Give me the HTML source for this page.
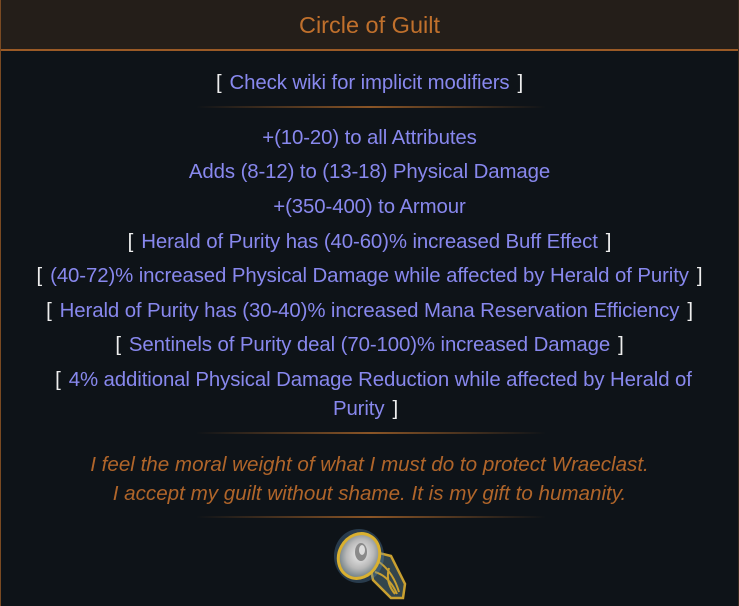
<!DOCTYPE html>
<html><head><meta charset="utf-8"><style>
html,body{margin:0;padding:0;width:739px;height:606px;overflow:hidden;background:#0e1318;font-family:"Liberation Sans",sans-serif}
.wrap{position:absolute;left:0;top:0;width:737px;height:606px;border-left:1px solid #7a4a22;border-right:1px solid #3a2a1e}
.hdr{height:49px;background:#241e19;border-bottom:2px solid #9a5a26;text-align:center;color:#c0702c;font-size:23.5px;line-height:50px}
.l{position:absolute;left:0;width:737px;text-align:center;color:#8888ee;font-size:20.4px;white-space:nowrap;letter-spacing:-0.1px}
.b{color:#eeeeee;margin:0 8px}
.sep{position:absolute;left:195px;width:350px;height:2px;background:linear-gradient(90deg,rgba(120,70,30,0),#8a5526 50%,rgba(120,70,30,0))}
.f{position:absolute;left:0;width:737px;text-align:center;color:#b0652a;font-size:20.6px;font-style:italic}
</style></head><body><div class="wrap">
<div class="hdr">Circle of Guilt</div>
<div class="l" style="top:72px"><span class="b">[</span>Check wiki for implicit modifiers<span class="b">]</span></div>
<div class="sep" style="top:106px"></div>
<div class="l" style="top:127px">+(10-20) to all Attributes</div>
<div class="l" style="top:161px">Adds (8-12) to (13-18) Physical Damage</div>
<div class="l" style="top:196px">+(350-400) to Armour</div>
<div class="l" style="top:231px"><span class="b">[</span>Herald of Purity has (40-60)% increased Buff Effect<span class="b">]</span></div>
<div class="l" style="top:265px"><span class="b">[</span>(40-72)% increased Physical Damage while affected by Herald of Purity<span class="b">]</span></div>
<div class="l" style="top:300px"><span class="b">[</span>Herald of Purity has (30-40)% increased Mana Reservation Efficiency<span class="b">]</span></div>
<div class="l" style="top:334px"><span class="b">[</span>Sentinels of Purity deal (70-100)% increased Damage<span class="b">]</span></div>
<div class="l" style="top:369px"><span class="b">[</span>4% additional Physical Damage Reduction while affected by Herald of</div>
<div class="l" style="top:398px">Purity<span class="b">]</span></div>
<div class="sep" style="top:432px"></div>
<div class="f" style="top:453px">I feel the moral weight of what I must do to protect Wraeclast.</div>
<div class="f" style="top:482px">I accept my guilt without shame. It is my gift to humanity.</div>
<div class="sep" style="top:516px"></div>
<svg style="position:absolute;left:332px;top:528px" width="76" height="74" viewBox="0 0 76 74">
<defs><radialGradient id="g" cx="50%" cy="45%" r="55%"><stop offset="0" stop-color="#f0f0f0"/><stop offset=".6" stop-color="#b8b8b8"/><stop offset="1" stop-color="#6a7a80"/></radialGradient></defs>
<path d="M34 22 L58 28 L72 56 L70 70 L58 70 L40 52Z" fill="#33454c" stroke="#c9a030" stroke-width="2.5"/>
<path d="M46 34 q14 10 20 30 M42 44 q14 4 22 22 M56 40 q-4 14 6 26" stroke="#c9a030" stroke-width="2" fill="none"/>
<ellipse cx="26" cy="28" rx="25" ry="27" fill="#5a88b0" opacity=".35"/>
<ellipse cx="26" cy="28" rx="20" ry="23" transform="rotate(28 26 28)" fill="url(#g)" stroke="#d9b030" stroke-width="3"/>
<ellipse cx="28" cy="24" rx="6" ry="9" fill="#8a8a8a"/>
<ellipse cx="29" cy="22" rx="3" ry="5" fill="#ddd"/>
</svg>
</div></body></html>
